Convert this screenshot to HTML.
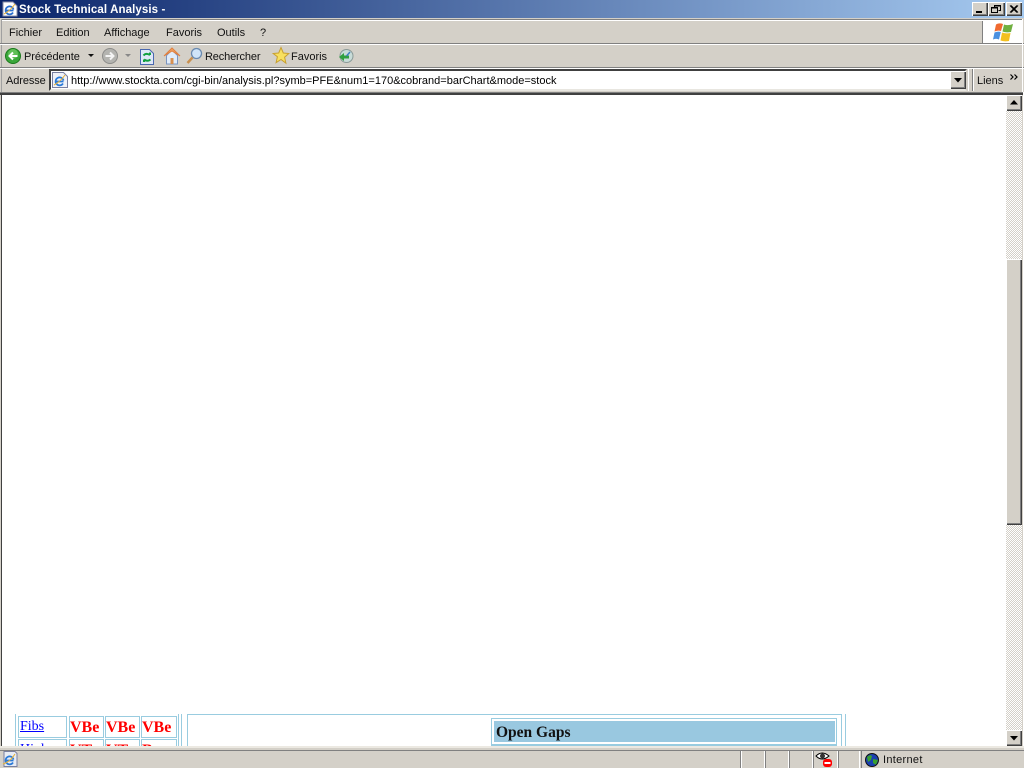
<!DOCTYPE html>
<html><head><meta charset="utf-8"><title>Stock Technical Analysis</title>
<style>
html,body{margin:0;padding:0;width:1024px;height:768px;overflow:hidden;background:#d4d0c8}
body{position:relative;font-family:"Liberation Sans",sans-serif;font-size:11px;color:#000}
.a{position:absolute}
.t{position:absolute;white-space:nowrap;line-height:13px;font-family:"Liberation Sans",sans-serif;font-size:11px;color:#111}
.btn{position:absolute;background:#d4d0c8;box-shadow:inset 1px 1px 0 #fff,inset -1px -1px 0 #404040,inset -2px -2px 0 #808080;box-sizing:border-box}
.cell{position:absolute;box-sizing:border-box;border:1px solid #99cce0;font-family:"Liberation Serif",serif;font-size:16px;line-height:21px;padding-left:0;font-weight:bold;color:#f00;white-space:nowrap;overflow:hidden}
.l{position:absolute;background:#99cce0}
svg{position:absolute;overflow:visible}
</style></head><body>
<!-- title bar -->
<div class="a" style="left:0;top:0;width:1024px;height:18px;background:linear-gradient(90deg,#0a246a,#a6caf0)"></div>
<svg style="left:2px;top:1px" width="16" height="16" viewBox="0 0 16 16"><path d="M1 1h10l4 4v10H1z" fill="#fff" stroke="#8a8fa8"/><path d="M11.500 9.500H4.500M11 11.500A4 4 0 1 1 11.500 8.500" fill="none" stroke="#2a6fd0" stroke-width="1.700"/><path d="M2 13Q8 10 13 3" stroke="#e8b030" fill="none"/></svg>
<div class="t" style="left:19px;top:4px;font-weight:bold;color:#fff;font-size:11.5px;letter-spacing:.1px">Stock Technical Analysis -</div>
<div class="btn" style="left:972px;top:2px;width:16px;height:14px"></div>
<div class="a" style="left:976px;top:11px;width:6px;height:2px;background:#000"></div>
<div class="btn" style="left:988px;top:2px;width:17px;height:14px"></div>
<svg style="left:988px;top:2px" width="17" height="14"><path d="M6.500 5.500V3.500h6v5h-2M3.500 5.500h6v5h-6z M6 4h7M4 6h5" fill="none" stroke="#000"/></svg>
<div class="btn" style="left:1006px;top:2px;width:16px;height:14px"></div>
<svg style="left:1006px;top:2px" width="16" height="14"><path d="M4 3.500l7 7M5 3.500l7 7M11 3.500l-7 7M12 3.500l-7 7" stroke="#000"/></svg>
<!-- chrome lines -->
<div class="a" style="left:0;top:18px;width:1024px;height:1px;background:#d4d0c8"></div>
<div class="a" style="left:1px;top:19px;width:1022px;height:1px;background:#808080"></div>
<div class="a" style="left:1px;top:20px;width:1022px;height:1px;background:#fff"></div>
<div class="a" style="left:1px;top:19px;width:1px;height:73px;background:#a0a0a0"></div>
<div class="a" style="left:0;top:43px;width:1024px;height:1px;background:#808080"></div>
<div class="a" style="left:0;top:44px;width:1024px;height:1px;background:#fff"></div>
<div class="a" style="left:0;top:67px;width:1024px;height:1px;background:#808080"></div>
<div class="a" style="left:0;top:68px;width:1024px;height:1px;background:#fff"></div>
<div class="a" style="left:1022px;top:19px;width:1px;height:73px;background:#fff"></div>
<!-- menu -->
<div class="t" style="left:9px;top:26px;margin-top:1px">Fichier</div>
<div class="t" style="left:56px;top:27px">Edition</div>
<div class="t" style="left:104px;top:27px">Affichage</div>
<div class="t" style="left:166px;top:27px">Favoris</div>
<div class="t" style="left:217px;top:27px">Outils</div>
<div class="t" style="left:260px;top:27px">?</div>
<div class="a" style="left:982px;top:21px;width:1px;height:22px;background:#808080"></div>
<div class="a" style="left:983px;top:21px;width:39px;height:22px;background:#fff"></div>
<svg style="left:993px;top:22px" width="20" height="20" viewBox="0 0 20 20"><path d="M3 2.500Q6 .500 10 2L8 9Q5 8 1.500 9.500z" fill="#f06a30"/><path d="M11 2.500Q15 4 20 2L18 10Q13 11 9.500 9.500z" fill="#70b040"/><path d="M1.500 10.500Q5 9 7.800 10L6 17.500Q3 16 0 17.500z" fill="#4a90e0"/><path d="M9 10.500Q13 12 17.500 11L16 19Q11.500 20 7.500 18.500z" fill="#f4c020"/></svg>
<!-- toolbar -->
<svg style="left:5px;top:48px" width="16" height="16"><circle cx="8" cy="8" r="7.500" fill="#3aa63a" stroke="#1c7a1c"/><circle cx="8" cy="6" r="5" fill="#7ad06a" opacity=".6"/><path d="M12.500 8H5M8 4.500L4.500 8 8 11.500" fill="none" stroke="#fff" stroke-width="2"/></svg>
<div class="t" style="left:24px;top:51px;letter-spacing:-.05px">Précédente</div>
<svg style="left:88px;top:54px" width="7" height="4"><path d="M0 0h6L3 3z" fill="#111"/></svg>
<svg style="left:102px;top:48px" width="16" height="16"><circle cx="8" cy="8" r="7.500" fill="#b4b4b0" stroke="#8c8c8a"/><path d="M3.500 8H11M8 4.500L11.500 8 8 11.500" fill="none" stroke="#f4f4f4" stroke-width="2"/></svg>
<svg style="left:125px;top:54px" width="7" height="4"><path d="M0 0h6L3 3z" fill="#888"/></svg>
<svg style="left:140px;top:49px" width="14" height="16"><path d="M.5.500h9l4 4v11H.500z" fill="#dfe8f8" stroke="#4a68b0"/><path d="M3.500 6.500Q6 3.500 10 6M10 6V3.500M10.500 10.500Q7.500 13 4 10.500M4 10.500V13" fill="none" stroke="#12a040" stroke-width="2"/></svg>
<svg style="left:163px;top:47px" width="18" height="18" viewBox="0 0 18 18"><path d="M3.500 8.500L9 3l5.500 5.500V17h-11z" fill="#e0ecfa" stroke="#7a94c0"/><path d="M1 9L9 1l8 8L9 4z" fill="#f0a060" stroke="#e08040"/><path d="M7.500 11h3v6h-3z" fill="#d89050"/></svg>
<svg style="left:186px;top:47px" width="17" height="18" viewBox="0 0 17 18"><circle cx="10.500" cy="6.500" r="5" fill="#cfe4f8" stroke="#6a8ab0" stroke-width="1.300"/><path d="M6.500 10.500L1.500 16" stroke="#c89050" stroke-width="2.500"/></svg>
<div class="t" style="left:205px;top:51px;letter-spacing:-.15px">Rechercher</div>
<svg style="left:273px;top:47px" width="16" height="17" viewBox="0 0 16 17"><path d="M8 .500l2.300 5.500 5.500.5-4.200 3.700 1.300 6L8 12.500 3.100 15.700l1.300-6L.2 6.500l5.500-.5z" fill="#f8e060" stroke="#c8a030"/></svg>
<div class="t" style="left:291px;top:51px">Favoris</div>
<svg style="left:338px;top:48px" width="16" height="16" viewBox="0 0 16 16"><circle cx="8.500" cy="8" r="6.500" fill="#c8dcd8" stroke="#8a9a98"/><path d="M1 9l5-4v2.500h5v3H6V13z" fill="#30a040"/><path d="M8.500 8L12 4" stroke="#4080c0" stroke-width="1.500"/></svg>
<!-- address -->
<div class="t" style="left:6px;top:75px;letter-spacing:-.1px">Adresse</div>
<div class="a" style="left:49px;top:69px;width:918px;height:22px;box-sizing:border-box;background:#fff;border:2px solid #404040;border-right-color:#d4d0c8;border-bottom-color:#e8e6e0"></div>
<svg style="left:52px;top:72px" width="16" height="16" viewBox="0 0 16 16"><path d="M.5.500h11l4 4v11H.500z" fill="#f0f2f8" stroke="#7a80a0"/><path d="M11.500 9.500H4.500M11 11.500A4 4 0 1 1 11.500 8.500" fill="none" stroke="#2a7ad8" stroke-width="1.700"/><path d="M2 13Q8 10 13 3" stroke="#e8b030" fill="none"/></svg>
<div class="t" style="left:71px;top:75px;color:#000;font-size:11px">http://www.stockta.com/cgi-bin/analysis.pl?symb=PFE&amp;num1=170&amp;cobrand=barChart&amp;mode=stock</div>
<div class="btn" style="left:950px;top:71px;width:16px;height:18px"></div>
<svg style="left:954px;top:78px" width="8" height="5"><path d="M0 0h8L4 4.500z" fill="#000"/></svg>
<div class="a" style="left:968px;top:69px;width:1px;height:22px;background:#fff"></div>
<div class="a" style="left:972px;top:69px;width:1px;height:22px;background:#808080"></div>
<div class="a" style="left:973px;top:69px;width:1px;height:22px;background:#fff"></div>
<div class="t" style="left:977px;top:75px">Liens</div>
<svg style="left:1010px;top:74px" width="8" height="6"><path d="M.5.500L3 3 .5 5.500M4.500.500L7 3 4.500 5.500" fill="none" stroke="#000" stroke-width="1.200"/></svg>
<!-- page area -->
<div class="a" style="left:0;top:92px;width:1024px;height:1px;background:#808080"></div>
<div class="a" style="left:0;top:93px;width:1024px;height:2px;background:#404040"></div>
<div class="a" style="left:1px;top:93px;width:1px;height:653px;background:#404040"></div>
<div class="a" style="left:1022px;top:95px;width:1px;height:651px;background:#d4d0c8"></div>
<div class="a" style="left:1023px;top:92px;width:1px;height:654px;background:#fff"></div>
<div class="a" style="left:2px;top:95px;width:1020px;height:651px;background:#fff;overflow:hidden"></div>
<!-- scrollbar -->
<div class="a" style="left:1006px;top:95px;width:16px;height:651px;background:conic-gradient(#fff 25%,#d4d0c8 0 50%,#fff 0 75%,#d4d0c8 0) 0 0/2px 2px"></div>
<div class="btn" style="left:1006px;top:95px;width:16px;height:16px"></div>
<svg style="left:1010px;top:100px" width="8" height="5"><path d="M4 0l4 4.500H0z" fill="#000"/></svg>
<div class="btn" style="left:1006px;top:259px;width:16px;height:266px"></div>
<div class="btn" style="left:1006px;top:730px;width:16px;height:16px"></div>
<svg style="left:1010px;top:736px" width="8" height="5"><path d="M0 0h8L4 4.500z" fill="#000"/></svg>
<!-- page fragment -->
<div class="a" style="left:2px;top:700px;width:1004px;height:46px;overflow:hidden">
<div class="l" style="left:13px;top:14px;width:1px;height:32px"></div>
<div class="cell" style="left:16px;top:16px;width:49px;height:22px;font-weight:normal;color:#00f;font-size:14px;padding-left:1px;line-height:20px"><u>Fibs</u></div>
<div class="cell" style="left:67px;top:16px;width:35px;height:22px">VBe</div>
<div class="cell" style="left:103px;top:16px;width:35px;height:22px">VBe</div>
<div class="cell" style="left:139px;top:16px;width:36px;height:22px">VBe</div>
<div class="cell" style="left:16px;top:39px;width:49px;height:22px;font-weight:normal;color:#00f;font-size:14px;padding-left:1px;line-height:20px"><u>High</u></div>
<div class="cell" style="left:67px;top:39px;width:35px;height:22px">VT</div>
<div class="cell" style="left:103px;top:39px;width:35px;height:22px">VT</div>
<div class="cell" style="left:139px;top:39px;width:36px;height:22px">Be</div>
<div class="l" style="left:176px;top:14px;width:1px;height:32px"></div>
<div class="l" style="left:179px;top:14px;width:1px;height:32px"></div>
<div class="l" style="left:185px;top:14px;width:655px;height:1px"></div>
<div class="l" style="left:185px;top:14px;width:1px;height:32px"></div>
<div class="l" style="left:839px;top:14px;width:1px;height:32px"></div>
<div class="l" style="left:843px;top:14px;width:1px;height:32px"></div>
<div class="a" style="left:489px;top:18px;width:346px;height:30px;box-sizing:border-box;border:1px solid #99cce0"></div>
<div class="a" style="left:492px;top:21px;width:341px;height:21px;background:#99c8e0;font-family:'Liberation Serif',serif;font-weight:bold;font-size:15.5px;line-height:23px;padding-left:2px;box-sizing:border-box;color:#111">Open Gaps</div>
<div class="l" style="left:490px;top:44px;width:344px;height:2px"></div>
</div>
<!-- status bar -->
<div class="a" style="left:0;top:746px;width:1024px;height:2px;background:#ece9e2"></div>
<div class="a" style="left:0;top:748px;width:1024px;height:2px;background:#d4d0c8"></div>
<div class="a" style="left:0;top:750px;width:1024px;height:1px;background:#808080"></div>
<svg style="left:2px;top:751px" width="16" height="16" viewBox="0 0 16 16"><path d="M2 .500h11l2 2v13H2z" fill="#e8ecf4" stroke="#7a80a0"/><path d="M11.500 9.500H4.500M11 11.500A4 4 0 1 1 11.500 8.500" fill="none" stroke="#2a7ad8" stroke-width="1.700"/><path d="M1 13Q8 11 13 3" stroke="#e8b030" fill="none"/></svg>
<div class="a" style="left:740px;top:751px;width:1px;height:17px;background:#808080"></div><div class="a" style="left:741px;top:751px;width:1px;height:17px;background:#fff"></div>
<div class="a" style="left:765px;top:751px;width:1px;height:17px;background:#808080"></div><div class="a" style="left:764px;top:751px;width:1px;height:17px;background:#fff"></div>
<div class="a" style="left:789px;top:751px;width:1px;height:17px;background:#808080"></div><div class="a" style="left:788px;top:751px;width:1px;height:17px;background:#fff"></div>
<div class="a" style="left:813px;top:751px;width:1px;height:17px;background:#808080"></div><div class="a" style="left:812px;top:751px;width:1px;height:17px;background:#fff"></div>
<div class="a" style="left:838px;top:751px;width:1px;height:17px;background:#808080"></div><div class="a" style="left:837px;top:751px;width:1px;height:17px;background:#fff"></div>
<div class="a" style="left:861px;top:751px;width:1px;height:17px;background:#808080"></div><div class="a" style="left:859px;top:751px;width:1px;height:17px;background:#fff"></div>
<svg style="left:815px;top:751px" width="18" height="16" viewBox="0 0 18 16"><path d="M1 5Q7 -1 14 5Q7 11 1 5z" fill="#fff" stroke="#000"/><circle cx="7.500" cy="5" r="2.500" fill="#333"/><rect x="8" y="8" width="9" height="8" rx="3" fill="#f00"/><path d="M9.500 11h6v2h-6z" fill="#fff"/></svg>
<svg style="left:865px;top:753px" width="14" height="14" viewBox="0 0 14 14"><circle cx="7" cy="7" r="6.500" fill="#1a3fb0"/><path d="M2 4Q5 1 7 3L6 7 3 9zM8 6l5 1-2 5-3-2z" fill="#38a030"/><circle cx="7" cy="7" r="6.500" fill="none" stroke="#111"/></svg>
<div class="t" style="left:883px;top:754px;letter-spacing:.3px">Internet</div>
</body></html>
